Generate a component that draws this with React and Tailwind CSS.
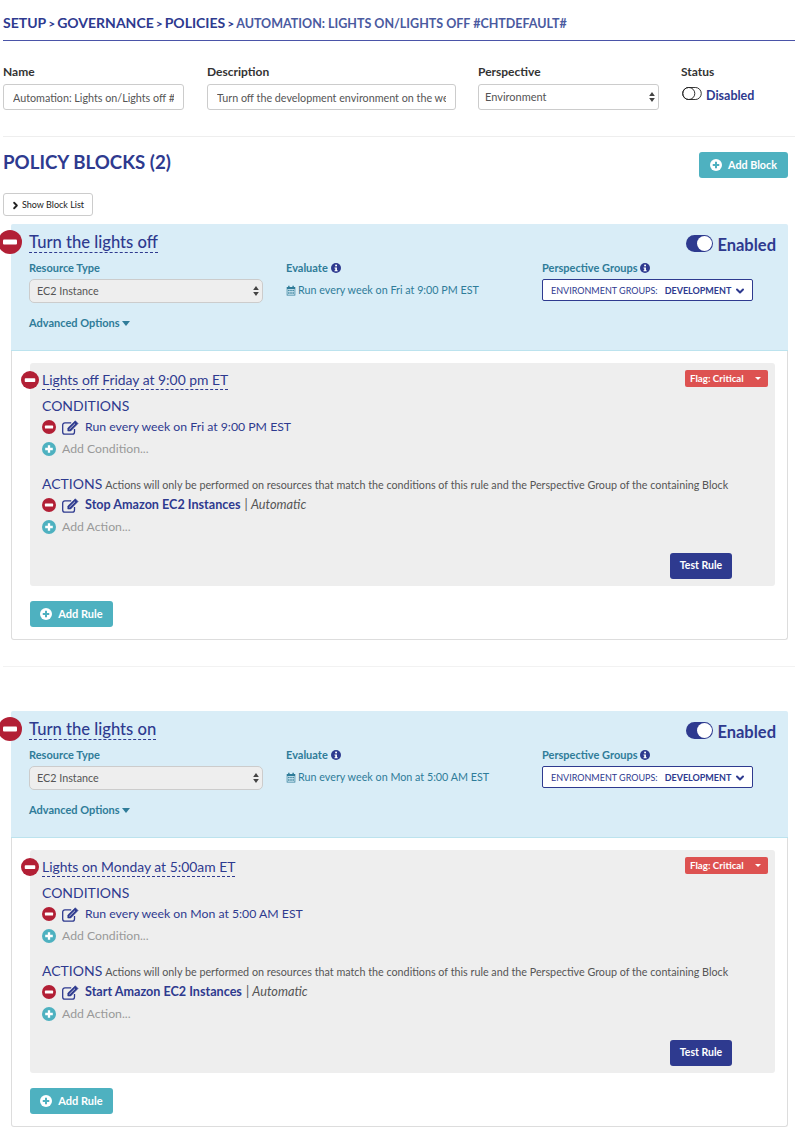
import React from 'react';
import { ChevronRight, ChevronDown } from 'lucide-react';

const font = 'font-["Lato","Open_Sans",sans-serif]';

const MinusIcon = ({ className }) => (
  <svg viewBox="0 0 24 24" className={className}>
    <circle cx="12" cy="12" r="12" fill="#b21f35" />
    <rect x="5" y="9.500" width="14" height="5" rx="1" fill="#fff" />
  </svg>
);

const PlusIcon = ({ className }) => (
  <svg viewBox="0 0 24 24" className={className}>
    <circle cx="12" cy="12" r="12" fill="currentColor" />
    <path d="M12 5.500v13M5.500 12h13" stroke="#fff" strokeWidth="4" />
  </svg>
);

const WhitePlus = ({ className }) => (
  <svg viewBox="0 0 24 24" className={className}>
    <circle cx="12" cy="12" r="12" fill="#fff" />
    <path d="M12 5.500v13M5.500 12h13" stroke="#4eb1c0" strokeWidth="4" />
  </svg>
);

const InfoIcon = () => (
  <svg viewBox="0 0 24 24" className="w-[10px] h-[10px] shrink-0">
    <circle cx="12" cy="12" r="12" fill="#2e3a8f" />
    <rect x="10" y="4" width="4.400" height="4" fill="#fff" />
    <path d="M8.500 10.500h5.800v7h1.700v2.500H8.500v-2.500h1.700v-4.500H8.500z" fill="#fff" />
  </svg>
);

const EditIcon = () => (
  <svg viewBox="0 0 17 15" fill="none" className="block w-[17px] h-[15px] shrink-0" stroke="#2e3a8f">
    <path d="M12.500 9v3a2.200 2.200 0 0 1-2.200 2.200H2.900A2.200 2.200 0 0 1 .7 12V5a2.200 2.200 0 0 1 2.200-2.200h6.300" strokeWidth="1.300" />
    <path d="M5.800 8 13.300.8l2.700 2.700L8.700 11H5.800z" fill="#2e3a8f" strokeWidth="0.600" />
    <path d="M7.300 9.300 13 3.700" stroke="#eeeeee" strokeWidth="0.800" />
  </svg>
);

const CalendarIcon = () => (
  <svg viewBox="0 0 14 14" className="w-[10px] h-[11px] shrink-0" fill="#2f7c99">
    <path d="M1 2h2V.5h2V2h4V.5h2V2h2v12H1zM2 5v8h10V5z" />
    <path d="M3 6h2v2H3zM6 6h2v2H6zM9 6h2v2H9zM3 9.500h2v2H3zM6 9.500h2v2H6zM9 9.500h2v2H9z" />
  </svg>
);

const SelectArrows = () => (
  <svg viewBox="0 0 8 14" className="w-[6px] h-[10px] shrink-0" fill="#444">
    <path d="M4 0 8 5.500H0zM4 14 0 8.500h8z" />
  </svg>
);

const Toggle = () => (
  <div className="flex -mt-[3px] w-[27px] h-[17px] rounded-full bg-[#2e3a8f] justify-end items-center p-[1px]">
    <div className="w-[15px] h-[15px] rounded-full bg-white" />
  </div>
);

const Label = ({ children }) => (
  <div className="text-[12px] font-bold leading-[14px] text-[#333]">{children}</div>
);

const BlockLabel = ({ children }) => (
  <div className="flex items-center gap-[3px] text-[11px] font-bold leading-[14px] text-[#2f7c99]">{children}</div>
);

const Rule = ({ title, condition, action }) => (
  <div className="relative bg-[#eeeeee] rounded-[3px] h-[223px] pl-[12px] pr-[7px] pt-[8px]">
    <MinusIcon className="absolute left-[-9px] top-[8px] w-[18px] h-[18px]" />
    <div className="flex justify-between items-start">
      <span className="text-[13.900px] leading-[18px] text-[#2e3a8f] border-b border-dashed border-[#2e3a8f] whitespace-nowrap">{title}</span>
      <div className="-mt-[1px] flex items-center justify-between w-[83px] h-[17px] bg-[#dd5251] rounded-[2px] px-[5px] text-[9.750px] font-bold text-white">
        <span>Flag: Critical</span>
        <span className="w-0 h-0 mr-[2px] border-x-[3.500px] border-x-transparent border-t-[3.500px] border-t-white" />
      </div>
    </div>
    <div className="mt-[7px] text-[14px] leading-[18px] text-[#2e3a8f]">CONDITIONS</div>
    <div className="mt-[3px] flex items-center h-[18px] text-[12.250px] text-[#2e3a8f]">
      <MinusIcon className="w-[14px] h-[14px] shrink-0" />
      <span className="ml-[6px]"><EditIcon /></span>
      <span className="ml-[6px]">{condition}</span>
    </div>
    <div className="mt-[4px] flex items-center h-[18px] text-[12.250px] text-[#999]">
      <PlusIcon className="w-[14px] h-[14px] shrink-0 text-[#4eb1c0]" />
      <span className="ml-[6px]">Add Condition...</span>
    </div>
    <div className="mt-[17px] flex items-baseline h-[18px] text-[#2e3a8f]">
      <span className="text-[14px] leading-[18px]">ACTIONS</span>
      <span className="ml-[3px] text-[10.750px] text-[#555] whitespace-nowrap">Actions will only be performed on resources that match the conditions of this rule and the Perspective Group of the containing Block</span>
    </div>
    <div className="mt-[3px] flex items-center h-[18px] text-[12.250px] text-[#2e3a8f]">
      <MinusIcon className="w-[14px] h-[14px] shrink-0" />
      <span className="ml-[6px]"><EditIcon /></span>
      <span className="ml-[6px] text-[12.600px] font-bold">{action}</span>
      <span className="ml-[4px] text-[12.750px] text-[#555]">| <i>Automatic</i></span>
    </div>
    <div className="mt-[4px] flex items-center h-[18px] text-[12.250px] text-[#999]">
      <PlusIcon className="w-[14px] h-[14px] shrink-0 text-[#4eb1c0]" />
      <span className="ml-[6px]">Add Action...</span>
    </div>
    <div className="flex justify-end mt-[17px] pr-[36px]">
      <button className="w-[62px] h-[26px] rounded-[3px] bg-[#2e3a8f] text-white text-[10.500px] font-bold">Test Rule</button>
    </div>
  </div>
);

const Block = ({ title, evaluate, rule }) => (
  <div className="ml-[11px] mr-[21px]">
    <div className="relative h-[127px] bg-[#d9edf7] border-b border-[#bce3ee] rounded-t-[2px] pl-[18px] pr-[12px]">
      <MinusIcon className="absolute left-[-13px] top-[6px] w-[24px] h-[24px]" />
      <div className="flex justify-between pt-[8px]">
        <span className="text-[16.600px] font-medium leading-[20px] text-[#2e3a8f] border-b border-dashed border-[#2e3a8f] h-[21px] whitespace-nowrap">{title}</span>
        <div className="flex items-center gap-[4px] pt-[2px] h-[24px]">
          <Toggle />
          <span className="text-[16.500px] font-bold text-[#2e3a8f]">Enabled</span>
        </div>
      </div>
      <div className="mt-[5px] grid grid-cols-[257px_256px_1fr]">
        <div>
          <BlockLabel>Resource Type</BlockLabel>
          <div className="mt-[4px] flex items-center justify-between w-[234px] h-[24px] rounded-[5px] bg-[#eeeeee] border border-[#cccccc] pl-[7px] pr-[3px] text-[10.750px] text-[#555]">
            EC2 Instance
            <SelectArrows />
          </div>
        </div>
        <div>
          <BlockLabel>Evaluate <InfoIcon /></BlockLabel>
          <div className="mt-[7px] flex items-center gap-[2px] text-[10.750px] text-[#2f7c99] whitespace-nowrap">
            <CalendarIcon />
            {evaluate}
          </div>
        </div>
        <div>
          <BlockLabel>Perspective Groups <InfoIcon /></BlockLabel>
          <div className="mt-[4px] flex items-center w-[211px] h-[22px] rounded-[2px] bg-white border border-[#2e3a8f] pl-[8px] pt-[1px] text-[9px] text-[#2e3a8f] whitespace-nowrap">
            ENVIRONMENT GROUPS:
            <b className="ml-[7px]">DEVELOPMENT</b>
            <ChevronDown size={12} strokeWidth={4} className="ml-[3px] shrink-0" />
          </div>
        </div>
      </div>
      <div className="mt-[13px] flex items-center gap-[2px] text-[11px] font-bold leading-[14px] text-[#2f7c99]">
        Advanced Options
        <span className="w-0 h-0 border-x-[4.500px] border-x-transparent border-t-[5px] border-t-[#2f7c99]" />
      </div>
    </div>
    <div className="h-[289px] border border-t-0 border-[#dddddd] rounded-b-[3px] pl-[18px] pr-[12px] pt-[12px]">
      {rule}
      <button className="mt-[15px] flex items-center justify-center gap-[6px] w-[83px] h-[26px] rounded-[3px] bg-[#4eb1c0] text-white text-[11px] font-bold">
        <WhitePlus className="w-[12px] h-[12px]" />
        Add Rule
      </button>
    </div>
  </div>
);

export default function App() {
  return (
    <div className={`${font} w-[809px] h-[1134px] overflow-hidden bg-white`}>
      <div className="mx-[3px] w-[792px] h-[41px] pt-[15px] border-b border-[#4a54a8] flex items-baseline text-[14px] font-bold leading-[16px] text-[#2e3a8f] whitespace-nowrap">
        <span>SETUP</span>
        <span className="mx-[2px] text-[12px]">&gt;</span>
        <span>GOVERNANCE</span>
        <span className="mx-[2px] text-[12px]">&gt;</span>
        <span>POLICIES</span>
        <span className="mx-[2px] text-[12px]">&gt;</span>
        <span className="text-[12.500px] text-[#4a5aa0]">AUTOMATION: LIGHTS ON/LIGHTS OFF #CHTDEFAULT#</span>
      </div>

      <div className="mx-[3px] w-[792px] h-[96px] border-b border-[#eeeeee] pt-[24px] flex">
        <div className="w-[204px]">
          <Label>Name</Label>
          <input readOnly value="Automation: Lights on/Lights off #CHTDEFAULT#" className="mt-[5px] w-[181px] h-[26px] rounded-[3px] border border-[#cccccc] px-[9px] text-[10.750px] text-[#555] outline-none" />
        </div>
        <div className="w-[271px]">
          <Label>Description</Label>
          <input readOnly value="Turn off the development environment on the weekends" className="mt-[5px] w-[249px] h-[26px] rounded-[3px] border border-[#cccccc] px-[9px] text-[10.750px] text-[#555] outline-none" />
        </div>
        <div className="w-[203px]">
          <Label>Perspective</Label>
          <div className="mt-[5px] flex items-center justify-between w-[181px] h-[26px] rounded-[3px] border border-[#cccccc] pl-[6px] pr-[3px] text-[11px] text-[#555]">
            Environment
            <SelectArrows />
          </div>
        </div>
        <div>
          <Label>Status</Label>
          <div className="mt-[7px] flex items-center gap-[4px] h-[20px] text-[12.500px] font-bold text-[#2e3a8f]">
            <svg viewBox="0 0 21 14" className="w-[20px] h-[13px] -mt-[5px] ml-[1px]" fill="none" stroke="#222">
              <rect x="0.500" y="0.500" width="20" height="13" rx="6.500" />
              <circle cx="7" cy="7" r="6.500" />
            </svg>
            Disabled
          </div>
        </div>
      </div>

      <div className="mx-[3px] w-[785px] mt-[15px] h-[26px] flex justify-between">
        <h1 className="text-[18.700px] font-bold leading-[20px] text-[#2e3a8f]">POLICY BLOCKS (2)</h1>
        <button className="flex items-center justify-center gap-[6px] w-[89px] h-[26px] rounded-[3px] bg-[#4eb1c0] text-white text-[10.750px] font-bold">
          <WhitePlus className="w-[12px] h-[12px]" />
          Add Block
        </button>
      </div>

      <button className="ml-[3px] mt-[15px] flex items-center w-[90px] h-[23px] rounded-[3px] border border-[#cccccc] pl-[6px] pt-[1px] text-[9px] text-[#222]">
        <ChevronRight size={11} strokeWidth={4} />
        <span className="ml-[1px]">Show Block List</span>
      </button>

      <div className="mt-[8px]">
        <Block
          title="Turn the lights off"
          evaluate="Run every week on Fri at 9:00 PM EST"
          rule={<Rule title="Lights off Friday at 9:00 pm ET" condition="Run every week on Fri at 9:00 PM EST" action="Stop Amazon EC2 Instances" />}
        />
      </div>

      <div className="mt-[26px] mx-[3px] w-[792px] border-t border-[#f2f2f2]" />

      <div className="mt-[44px]">
        <Block
          title="Turn the lights on"
          evaluate="Run every week on Mon at 5:00 AM EST"
          rule={<Rule title="Lights on Monday at 5:00am ET" condition="Run every week on Mon at 5:00 AM EST" action="Start Amazon EC2 Instances" />}
        />
      </div>
    </div>
  );
}
